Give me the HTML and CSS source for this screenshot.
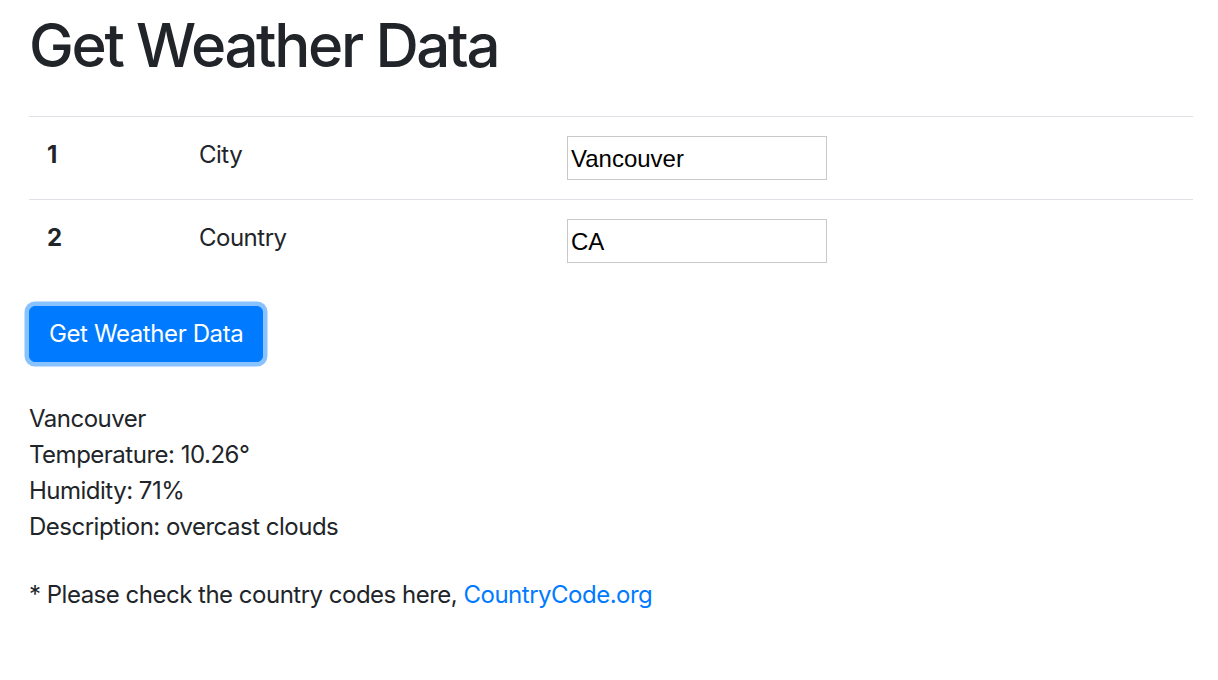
FILE: index.html
```html
<!DOCTYPE html>
<html lang="en">
<head>
<meta charset="utf-8">
<title>Get Weather Data</title>
<link rel="stylesheet" href="styles.css">
</head>
<body>
<div class="container">
  <h1 class="title">Get Weather Data</h1>
  <table class="table">
    <tbody>
      <tr>
        <th class="col-num">1</th>
        <td class="col-label">City</td>
        <td class="col-input"><input class="field" type="text" value="Vancouver"></td>
      </tr>
      <tr>
        <th class="col-num">2</th>
        <td class="col-label">Country</td>
        <td class="col-input"><input class="field" type="text" value="CA"></td>
      </tr>
    </tbody>
  </table>
  <button class="btn" type="button">Get Weather Data</button>
  <div class="result">
    <div>Vancouver</div>
    <div>Temperature: 10.26°</div>
    <div>Humidity: 71%</div>
    <div>Description: overcast clouds</div>
  </div>
  <p class="note">* Please check the country codes here, <a class="link" href="#">CountryCode.org</a></p>
</div>
</body>
</html>
```
FILE: styles.css
```css
* { box-sizing: border-box; }
html, body { margin: 0; padding: 0; background: #fff; }
body {
  font-family: Inter, "Liberation Sans", Arial, sans-serif;
  font-size: 24px;
  line-height: 36px;
  letter-spacing: -0.5px;
  color: #212529;
}
.container { padding: 0 25px 0 29px; }
.title {
  margin: 0;
  padding-top: 9px;
  font-size: 60px;
  line-height: 72px;
  font-weight: 500;
  letter-spacing: -2.35px;
  margin-bottom: 35px;
}
.table {
  width: 100%;
  border-collapse: collapse;
  margin-bottom: 24px;
}
.table th, .table td {
  padding: 20px 18px 19px;
  vertical-align: top;
  text-align: left;
  border-top: 1px solid #dee2e6;
}
.table .col-input { padding-top: 19px; }
.col-num { width: 152px; font-weight: 700; }
.col-label { width: 368px; }
.field {
  display: block;
  width: 260px;
  height: 44px;
  border: 1px solid #c9c9c9;
  padding: 1px 3px 0;
  font-family: "Liberation Sans", Arial, sans-serif;
  font-size: 24px;
  letter-spacing: 0;
  color: #000;
  background: #fff;
}
.btn {
  display: block;
  font-family: inherit;
  font-size: 24px;
  line-height: 36px;
  letter-spacing: -0.4px;
  padding: 9px 19px;
  color: #fff;
  background: #007bff;
  border: 1.5px solid #007bff;
  border-radius: 6px;
  box-shadow: 0 0 0 4.5px rgba(38, 143, 255, 0.55);
}
.result { margin-top: 39px; }
.note { margin: 32px 0 0; }
.link { color: #007bff; text-decoration: none; }
```
